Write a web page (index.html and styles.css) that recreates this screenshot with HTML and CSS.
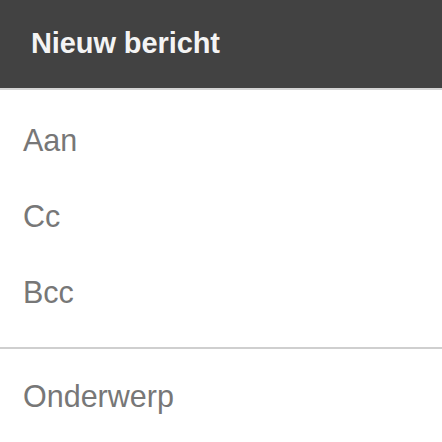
FILE: index.html
```html
<!DOCTYPE html>
<html>
<head>
<meta charset="utf-8">
<link rel="stylesheet" href="styles.css">
</head>
<body>
<div class="compose">
  <header class="compose-header">Nieuw bericht</header>
  <div class="recipients">
    <div class="field">Aan</div>
    <div class="field">Cc</div>
    <div class="field">Bcc</div>
  </div>
  <div class="subject">
    <div class="field">Onderwerp</div>
  </div>
</div>
</body>
</html>
```

FILE: styles.css
```css
html, body {
  margin: 0;
  padding: 0;
  background: #ffffff;
}
.compose {
  width: 442px;
  height: 442px;
  overflow: hidden;
  font-family: "Liberation Sans", Arial, sans-serif;
}
.compose-header {
  height: 86px;
  padding-bottom: 2px;
  background: #424242;
  border-bottom: 2px solid #d4d4d4;
  color: #f4f4f4;
  font-size: 29px;
  font-weight: bold;
  display: flex;
  align-items: center;
  padding-left: 31px;
  letter-spacing: -0.1px;
}
.recipients {
  padding-top: 12px;
  padding-bottom: 17px;
  border-bottom: 2px solid #cfcfcf;
}
.field {
  height: 76px;
  display: flex;
  align-items: center;
  padding-left: 23px;
  color: #777777;
  font-size: 30.5px;
}
.subject {
  padding-top: 9px;
}
```
